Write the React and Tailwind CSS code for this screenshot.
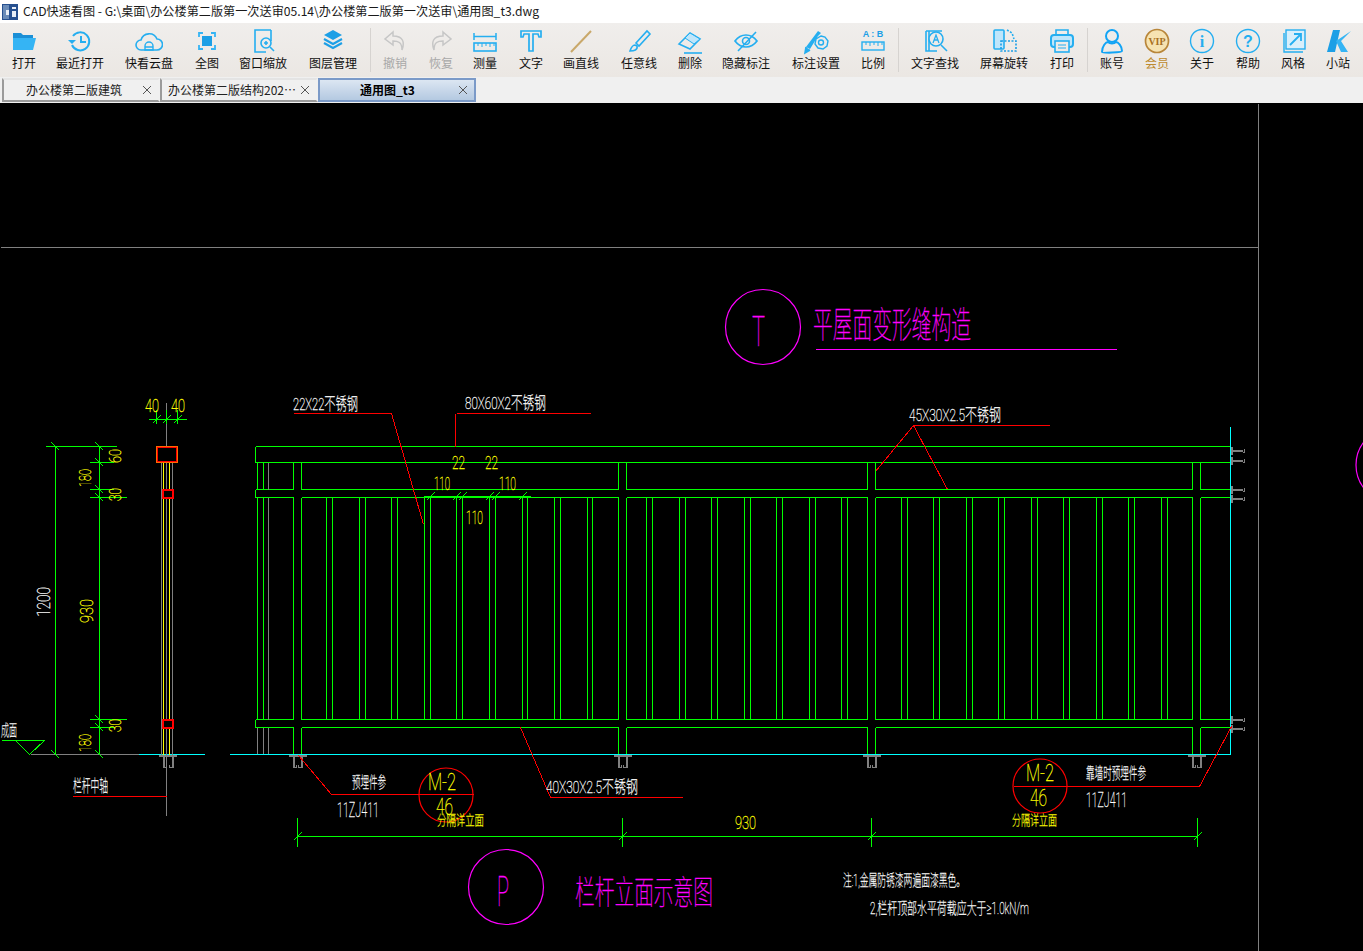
import React from "react";

const BLUE = "#25aef0";
const GREEN = "#00ff00";
const RED = "#ff0000";
const YELLOW = "#ffff00";
const CYAN = "#00ffff";
const MAGENTA = "#ff00ff";
const GRAY = "#808080";

function Ico({ children }) {
  return (
    <svg width="28" height="28" viewBox="0 0 28 28" fill="none" stroke={BLUE} strokeWidth="1.6" className="shrink-0">
      {children}
    </svg>
  );
}

const icons = {
  open: (
    <Ico>
      <path d="M3 6h8l2 2h10v3H3z" fill="#1b8fd6" stroke="none" />
      <path d="M3 11h23l-3 12H3z" fill="#35b4f4" stroke="none" />
    </Ico>
  ),
  recent: (
    <Ico>
      <path d="M7 9a9 9 0 1 1-1 9" strokeWidth="2" />
      <path d="M2 13h8l-4 4z" fill={BLUE} stroke="none" />
      <path d="M15 9v6h5" strokeWidth="2" />
    </Ico>
  ),
  cloud: (
    <Ico>
      <path d="M6 23a5 5 0 0 1 0-10 8.500 8.500 0 0 1 16-1 5.500 5.500 0 0 1 0 11z" strokeWidth="1.600" />
      <path d="M10 23v-4a4 4 0 0 1 8 0v4zM10 20h8" strokeWidth="1.400" />
    </Ico>
  ),
  full: (
    <Ico>
      <path d="M6 10V6h4M18 6h4v4M22 18v4h-4M10 22H6v-4" strokeWidth="1.800" stroke="#35b4f4" />
      <rect x="9" y="9" width="10" height="10" fill="#1c9fe6" stroke="none" />
    </Ico>
  ),
  zoomWin: (
    <Ico>
      <path d="M22 3H6v22h11M22 3v11" strokeWidth="1.6" />
      <circle cx="17" cy="16" r="5" />
      <path d="M15 16h4M17 14v4M21 20l4 4" />
    </Ico>
  ),
  layers: (
    <Ico>
      <path d="M14 3l9 5-9 5-9-5z" fill="#1c9fe6" stroke="none" />
      <path d="M5 12l9 5 9-5M5 16l9 5 9-5" strokeWidth="2.200" stroke="#1c9fe6" />
    </Ico>
  ),
  undo: (
    <Ico>
      <path d="M12 5L4 12l8 6v-4c5 0 9 1 9 9 3-8 1-14-9-14z" stroke="#c6c6c6" strokeWidth="1.500" />
    </Ico>
  ),
  redo: (
    <Ico>
      <path d="M16 5l8 7-8 6v-4c-5 0-9 1-9 9-3-8-1-14 9-14z" stroke="#c6c6c6" strokeWidth="1.500" />
    </Ico>
  ),
  measure: (
    <Ico>
      <path d="M3 6v7M25 6v7M3 9.500h22" strokeWidth="1.500" />
      <rect x="3" y="16" width="22" height="8" />
      <path d="M7 16v3M11 16v4M15 16v3M19 16v4M23 16v3" strokeWidth="1" />
    </Ico>
  ),
  text: (
    <Ico>
      <path d="M4 4h20v6h-2l-1-3h-5v17h-4V7H7l-1 3H4z" strokeWidth="1.700" />
    </Ico>
  ),
  line: (
    <Ico>
      <path d="M4 25L24 4" stroke="#c9a86a" strokeWidth="2" />
    </Ico>
  ),
  pencil: (
    <Ico>
      <path d="M11 16L22 4l3 3-11 12z" />
      <path d="M10 18c-3 0-4 3-5 6 4 0 8-1 7-5z" />
    </Ico>
  ),
  eraser: (
    <Ico>
      <path d="M3 17L14 6l10 6-10 10z" />
      <path d="M9 11l9 6 6-5-10-6z" fill="#bfe6fb" strokeWidth="1" />
      <path d="M8 26h18" />
    </Ico>
  ),
  eye: (
    <Ico>
      <path d="M3 14c6-8 16-8 22 0-6 8-16 8-22 0z" strokeWidth="1.700" />
      <circle cx="14" cy="14" r="3.500" />
      <path d="M6 24L24 5" />
    </Ico>
  ),
  annot: (
    <Ico>
      <path d="M4 20L16 4l3 2-3 3-8 13z" fill={BLUE} stroke="none" />
      <path d="M4 20l-1 6 5-3" fill={BLUE} />
      <path d="M19 9l4 1 3 4-1 5-4 3-5-1-3-4 1-5z" fill="#eeebe8" strokeWidth="1.400" />
      <circle cx="19" cy="15.500" r="2.500" strokeWidth="1.400" />
    </Ico>
  ),
  ratio: (
    <Ico>
      <text x="14" y="10" textAnchor="middle" fontSize="9" fontWeight="700" fill="#1c9fe6" stroke="none" className="font-['Liberation_Sans',sans-serif]">
        A : B
      </text>
      <rect x="3" y="15" width="22" height="8" strokeWidth="1.400" />
      <path d="M7 15v3M11 15v4M15 15v3M19 15v4M23 15v3" strokeWidth="1" />
    </Ico>
  ),
  textFind: (
    <Ico>
      <path d="M5 4h16M5 4v20h11M8 4v20" />
      <circle cx="15" cy="12" r="7" fill="#eeebe8" />
      <path d="M12 16l3-8 3 8M13 13h4" strokeWidth="1.300" />
      <path d="M20 18l6 6" />
    </Ico>
  ),
  rotate: (
    <Ico>
      <rect x="4" y="3" width="10" height="19" rx="1" fill="#bfe6fb" />
      <rect x="11" y="14" width="15" height="10" strokeDasharray="2 1.500" stroke="#1c9fe6" />
      <path d="M17 3l5 3 2 6" strokeDasharray="2 1.500" />
    </Ico>
  ),
  print: (
    <Ico>
      <path d="M8 8V3h12v5" />
      <rect x="3" y="8" width="22" height="12" rx="3" fill="#bfe6fb" strokeWidth="2" />
      <rect x="7" y="14" width="14" height="11" fill="#eeebe8" />
      <path d="M10 18h8M10 21h8" strokeWidth="1" />
    </Ico>
  ),
  user: (
    <Ico>
      <circle cx="14" cy="9" r="6" strokeWidth="2" stroke="#12a4f5" />
      <path d="M4 25c0-6 4-10 6-10 2 2 6 2 8 0 2 0 6 4 6 9 0 2-20 2-20 1z" strokeWidth="2" stroke="#12a4f5" />
    </Ico>
  ),
  vip: (
    <Ico>
      <circle cx="14" cy="14" r="11.500" fill="#f6e3b2" stroke="#b8863a" strokeWidth="1.700" />
      <text x="14" y="17.500" textAnchor="middle" fontSize="10" fontWeight="700" fill="#a8701e" stroke="none" className="font-['Liberation_Serif',serif]">
        VIP
      </text>
    </Ico>
  ),
  about: (
    <Ico>
      <circle cx="14" cy="14" r="11.500" strokeWidth="1.400" />
      <text x="14" y="20" textAnchor="middle" fontSize="16" fontWeight="700" fill={BLUE} stroke="none" className="font-['Liberation_Serif',serif]">
        i
      </text>
    </Ico>
  ),
  help: (
    <Ico>
      <circle cx="14" cy="14" r="11.500" strokeWidth="1.400" />
      <text x="14" y="20" textAnchor="middle" fontSize="16" fontWeight="700" fill={BLUE} stroke="none" className="font-['Liberation_Sans',sans-serif]">
        ?
      </text>
    </Ico>
  ),
  style: (
    <Ico>
      <path d="M5 6v19h19" fill="none" strokeWidth="1.400" />
      <rect x="7" y="3" width="19" height="19" fill="#d9effb" strokeWidth="1.400" />
      <path d="M11 18L22 7M15 7h7v7" strokeWidth="1.800" />
    </Ico>
  ),
  site: (
    <Ico>
      <path d="M9 3h7l-5 22H3z" fill="#1c9fe6" stroke="none" />
      <path d="M12 14L27 4 17 14l7 11h-7z" fill="#35b4f4" stroke="none" />
    </Ico>
  ),
};

const tools = [
  { id: "open", label: "打开", w: "w-[24px]", ml: "ml-[12px]" },
  { id: "recent", label: "最近打开", w: "w-[48px]", ml: "ml-[20px]" },
  { id: "cloud", label: "快看云盘", w: "w-[48px]", ml: "ml-[21px]" },
  { id: "full", label: "全图", w: "w-[24px]", ml: "ml-[22px]" },
  { id: "zoomWin", label: "窗口缩放", w: "w-[48px]", ml: "ml-[20px]" },
  { id: "layers", label: "图层管理", w: "w-[48px]", ml: "ml-[22px]" },
  { sep: true, ml: "ml-[13px]" },
  { id: "undo", label: "撤销", w: "w-[24px]", ml: "ml-[12px]", off: true },
  { id: "redo", label: "恢复", w: "w-[24px]", ml: "ml-[22px]", off: true },
  { id: "measure", label: "测量", w: "w-[24px]", ml: "ml-[20px]" },
  { id: "text", label: "文字", w: "w-[24px]", ml: "ml-[22px]" },
  { id: "line", label: "画直线", w: "w-[36px]", ml: "ml-[20px]" },
  { id: "pencil", label: "任意线", w: "w-[36px]", ml: "ml-[22px]" },
  { id: "eraser", label: "删除", w: "w-[24px]", ml: "ml-[21px]" },
  { id: "eye", label: "隐藏标注", w: "w-[48px]", ml: "ml-[20px]" },
  { id: "annot", label: "标注设置", w: "w-[48px]", ml: "ml-[22px]" },
  { id: "ratio", label: "比例", w: "w-[24px]", ml: "ml-[21px]" },
  { sep: true, ml: "ml-[13px]" },
  { id: "textFind", label: "文字查找", w: "w-[48px]", ml: "ml-[12px]" },
  { id: "rotate", label: "屏幕旋转", w: "w-[48px]", ml: "ml-[21px]" },
  { id: "print", label: "打印", w: "w-[24px]", ml: "ml-[22px]" },
  { sep: true, ml: "ml-[13px]" },
  { id: "user", label: "账号", w: "w-[24px]", ml: "ml-[12px]" },
  { id: "vip", label: "会员", w: "w-[24px]", ml: "ml-[21px]", gold: true },
  { id: "about", label: "关于", w: "w-[24px]", ml: "ml-[21px]" },
  { id: "help", label: "帮助", w: "w-[24px]", ml: "ml-[22px]" },
  { id: "style", label: "风格", w: "w-[24px]", ml: "ml-[21px]" },
  { id: "site", label: "小站", w: "w-[24px]", ml: "ml-[21px]" },
];

function Toolbar() {
  return (
    <div className="flex h-[54px] items-center bg-gradient-to-b from-[#f0eeec] to-[#ebe7e3]">
      {tools.map((t, i) =>
        t.sep ? (
          <div key={i} className={`h-[44px] w-px bg-[#d6d3d0] ${t.ml}`} />
        ) : (
          <div key={i} className={`flex h-full flex-col items-center ${t.w} ${t.ml}`}>
            <div className="mt-[4px] flex h-[28px] items-center justify-center">{icons[t.id]}</div>
            <span
              className={`whitespace-nowrap text-[12px] leading-[16px] ${
                t.gold ? "text-[#bd8a2e]" : t.off ? "text-[#a8a8a8]" : "text-[#111]"
              }`}
            >
              {t.label}
            </span>
          </div>
        )
      )}
    </div>
  );
}

const tabs = [
  { label: "办公楼第二版建筑", textClass: "pl-[22px]" },
  { label: "办公楼第二版结构202⋯", textClass: "pl-[6px]" },
  { label: "通用图_t3", textClass: "pl-[40px] font-bold", active: true },
];

function TabBar() {
  return (
    <div className="flex h-[26px] items-start bg-[#f0f0f0] pl-[2px] pt-px">
      {tabs.map((t) => (
        <div
          key={t.label}
          className={`flex h-[24px] w-[158px] items-center border-2 text-[12px] ${
            t.active
              ? "border-[#7b9ac8] bg-gradient-to-b from-[#dce6f2] to-[#b4c9e1] text-black"
              : "border-transparent border-l-[#9b9b9b] border-b-[#9b9b9b] border-t-[#e4e4e4] text-[#222]"
          }`}
        >
          <span className={`flex-1 whitespace-nowrap ${t.textClass}`}>{t.label}</span>
          <svg width="10" height="10" viewBox="0 0 10 10" className="mr-[6px]" stroke="#555" strokeWidth="1">
            <path d="M1 1l8 8M9 1l-8 8" />
          </svg>
        </div>
      ))}
    </div>
  );
}

// CAD text: stretched to the extents it has in the drawing
function T({ x, y, w, s, c = "#ffffff", rot, children }) {
  return (
    <text
      x={x}
      y={y}
      fontSize={s}
      fill={c}
      stroke={c}
      strokeWidth="0.3"
      textLength={w}
      lengthAdjust="spacingAndGlyphs"
      transform={rot ? `rotate(-90 ${x} ${y})` : undefined}
      className="font-['Roboto','Noto_Sans_CJK_SC',sans-serif] font-thin"
    >
      {children}
    </text>
  );
}

const Ln = ({ d, c = GREEN, w = 1 }) => <path d={d} stroke={c} strokeWidth={w} fill="none" />;

const posts = [
  [293, 301],
  [618, 626],
  [867, 875],
  [1192, 1200],
];
const balusters = [
  326, 332, 359, 365, 391, 397, 424, 430, 456, 462, 489, 495, 522, 527, 554, 560, 587, 592, 646, 652, 679, 685, 711,
  717, 744, 750, 776, 782, 809, 815, 841, 847, 901, 907, 933, 939, 966, 972, 998, 1004, 1031, 1037, 1063, 1069, 1096,
  1102, 1128, 1134, 1161, 1167,
];
const railSpans = [
  [255, 293],
  [301, 618],
  [626, 867],
  [875, 1192],
  [1200, 1230],
];

function Anchor({ a, b, left, right }) {
  return (
    <g>
      <Ln d={`M${left} 755H${right}`} c={GRAY} w={2} />
      <Ln d={`M${a} 755V767`} c={GRAY} w={2} />
      <Ln d={`M${b} 755V767`} c={GRAY} w={2} />
      <Ln d={`M${a} 767h3v-3M${b} 767h-3v-3`} c={GRAY} />
    </g>
  );
}

function WallAnchor({ y }) {
  return (
    <g>
      <Ln d={`M1231 ${y - 4}v8`} c={GRAY} w={2} />
      <Ln d={`M1231 ${y}h11`} c={GRAY} w={2} />
      <Ln d={`M1243 ${y - 1}h1v3h-2`} c={GRAY} />
    </g>
  );
}

function Ticks({ pts, dir = 1, c = GREEN }) {
  return (
    <path
      d={pts.map(([x, y]) => `M${x - 4} ${y + 4 * dir}L${x + 4} ${y - 4 * dir}`).join("")}
      stroke={c}
      strokeWidth="1"
      fill="none"
    />
  );
}

function Drawing() {
  return (
    <svg viewBox="0 103 1363 848" className="block h-full w-full">
      <g transform="translate(0.5 0.5)" shapeRendering="crispEdges">
        <Ln d="M0 247H1258" c={GRAY} />
        <Ln d="M1258 103V951" c={GRAY} />

        {/* railing */}
        <Ln d="M255 446H1230M255 462H1230M255 446V462" />
        {railSpans.map(([a, b]) => (
          <Ln key={a} d={`M${a} 489H${b}M${a} 497H${b}M${a} 719H${b}M${a} 727H${b}`} />
        ))}
        <Ln d="M255 489V497M255 719V727" />
        {posts.flat().map((x) => (
          <Ln key={x} d={`M${x} 462V489M${x} 497V719M${x} 727V754`} />
        ))}
        {balusters.map((x) => (
          <Ln key={x} d={`M${x} 497V719`} />
        ))}
        <Ln d="M257 462V489M263 462V489M257 497V719M263 497V719" />
        <Ln d="M268 462V489M268 497V719M268 727V754M257 727V754M263 727V754" c={GRAY} />

        {/* ground and wall */}
        <Ln d="M30 754H138" c={GRAY} />
        <Ln d="M138 754H204M229 754H1230M1230 426V754" c={CYAN} />
        <Anchor a={163} b={172} left={158} right={176} />
        {posts.map(([a, b]) => (
          <Anchor key={a} a={a} b={b} left={a - 5} right={b + 5} />
        ))}
        <WallAnchor y={450} />
        <WallAnchor y={460} />
        <WallAnchor y={489} />
        <WallAnchor y={498} />
        <WallAnchor y={719} />
        <WallAnchor y={728} />

        {/* section through the post */}
        <Ln d="M166 402V815" c={GRAY} />
        <Ln d="M161 462V754M172 462V754" c={GRAY} />
        <Ln d="M163 462V754M169 462V754" c={YELLOW} />
        <rect x="156" y="446" width="21" height="16" fill="#000" stroke="#ff6a00" />
        <rect x="157" y="447" width="19" height="14" fill="#000" stroke={RED} />
        <rect x="162" y="489" width="10" height="8" fill="#000" stroke={RED} strokeWidth="2" />
        <rect x="162" y="719" width="10" height="8" fill="#000" stroke={RED} strokeWidth="2" />

        {/* dimensions left */}
        <Ln d="M148 419H186M156 409V423M166 409V423M177 409V423" />
        <Ticks pts={[[156, 419], [166, 419], [177, 419]]} />
        <Ln d="M45 446H116M89 462H113M89 489H113M89 497H126M89 719H126M89 727H113M55 446V754M99 446V754" />
        <Ticks
          pts={[[55, 446], [99, 446], [99, 462], [99, 489], [99, 497], [99, 719], [99, 727], [99, 754], [55, 754]]}
          dir={-1}
        />
        <Ln d="M1 740H44M15 740L29 754M29 754L44 740" />

        {/* bottom dimensions */}
        <Ln d="M296 836H1197M297 817V846M622 817V846M871 817V846M1197 817V846" />
        <Ticks pts={[[297, 836], [622, 836], [871, 836], [1197, 836]]} />
        <Ln d="M423 496H530" w={2} />
        <Ticks pts={[[430, 496], [456, 496], [462, 496], [489, 496], [495, 496], [522, 496]]} />

        {/* leaders */}
        <Ln d="M293 413H391M391 413L423 524M456 413H590M455 413V446" c={RED} />
        <Ln d="M913 425H1049M913 425L875 471M913 425L947 489" c={RED} />
        <Ln d="M298 755L331 794H473M520 727L550 797H682" c={RED} />
        <Ln d="M1013 786H1199L1231 726" c={RED} />
        <Ln d="M72 796H166" c={RED} />
        <Ln d="M815 349H1116" c={MAGENTA} />
      </g>

      <g fill="none" strokeWidth="1.200">
        <circle cx="763" cy="327" r="37.500" stroke={MAGENTA} />
        <circle cx="506" cy="887" r="37.500" stroke={MAGENTA} />
        <circle cx="1394" cy="465" r="38" stroke={MAGENTA} />
        <circle cx="446" cy="795" r="27" stroke={RED} />
        <circle cx="1040" cy="786" r="27" stroke={RED} />
      </g>

      <T x={752} y={346} w={13} s={42} c={MAGENTA}>T</T>
      <T x={497} y={906} w={12} s={42} c={MAGENTA}>P</T>
      <T x={813} y={338} w={158} s={36} c={MAGENTA}>平屋面变形缝构造</T>
      <T x={575} y={904} w={138} s={33} c={MAGENTA}>栏杆立面示意图</T>

      <T x={293} y={410} w={65} s={17}>22X22不锈钢</T>
      <T x={465} y={409} w={81} s={17}>80X60X2不锈钢</T>
      <T x={909} y={421} w={92} s={17}>45X30X2.5不锈钢</T>
      <T x={546} y={793} w={92} s={17}>40X30X2.5不锈钢</T>
      <T x={352} y={788} w={34} s={16}>预埋件参</T>
      <T x={337} y={817} w={42} s={20}>11ZJ411</T>
      <T x={1086} y={779} w={60} s={16}>靠墙时预埋件参</T>
      <T x={1086} y={807} w={41} s={20}>11ZJ411</T>
      <T x={73} y={792} w={35} s={17}>栏杆中轴</T>
      <T x={1} y={736} w={16} s={16}>成面</T>
      <T x={843} y={886} w={122} s={16}>注:1,金属防锈漆两遍面漆黑色。</T>
      <T x={870} y={914} w={159} s={16}>2,栏杆顶部水平荷载应大于≥1.0kN/m</T>
      <T x={50} y={617} w={30} s={19} rot>1200</T>

      <T x={145} y={412} w={14} s={18} c={YELLOW}>40</T>
      <T x={171} y={412} w={14} s={18} c={YELLOW}>40</T>
      <T x={452} y={469} w={13} s={19} c={YELLOW}>22</T>
      <T x={485} y={469} w={13} s={19} c={YELLOW}>22</T>
      <T x={434} y={490} w={16} s={18} c={YELLOW}>110</T>
      <T x={499} y={490} w={17} s={18} c={YELLOW}>110</T>
      <T x={466} y={524} w={17} s={18} c={YELLOW}>110</T>
      <T x={735} y={829} w={21} s={18} c={YELLOW}>930</T>
      <T x={428} y={790} w={28} s={23} c={YELLOW}>M-2</T>
      <T x={436} y={815} w={17} s={23} c={YELLOW}>46</T>
      <T x={1026} y={781} w={28} s={23} c={YELLOW}>M-2</T>
      <T x={1030} y={806} w={17} s={23} c={YELLOW}>46</T>
      <T x={437} y={825} w={47} s={14} c={YELLOW}>分隔详立面</T>
      <T x={1012} y={825} w={45} s={14} c={YELLOW}>分隔详立面</T>
      <T x={91} y={487} w={18} s={17} c={YELLOW} rot>180</T>
      <T x={91} y={752} w={18} s={17} c={YELLOW} rot>180</T>
      <T x={93} y={623} w={24} s={19} c={YELLOW} rot>930</T>
      <T x={121} y={463} w={14} s={17} c={YELLOW} rot>60</T>
      <T x={121} y={501} w={13} s={17} c={YELLOW} rot>30</T>
      <T x={121} y={732} w={13} s={17} c={YELLOW} rot>30</T>
    </svg>
  );
}

export default function App() {
  return (
    <div className="flex h-[951px] w-[1363px] flex-col overflow-hidden bg-black font-['Noto_Sans_CJK_SC',sans-serif]">
      <div className="flex h-[23px] items-center bg-white">
        <svg width="16" height="16" viewBox="0 0 16 16" className="ml-[2px]">
          <rect width="16" height="16" fill="#27508f" />
          <rect x="1" y="1" width="6" height="14" fill="#6b8cb8" />
          <path d="M10 3h4v2h-4zM4 6h3v5H4zM10 7h4v6h-4z" fill="#e8eef6" />
        </svg>
        <span className="ml-[5px] whitespace-nowrap text-[12.150px] text-[#1a1a1a]">
          CAD快速看图 - G:\桌面\办公楼第二版第一次送审05.14\办公楼第二版第一次送审\通用图_t3.dwg
        </span>
      </div>
      <Toolbar />
      <TabBar />
      <div className="min-h-0 flex-1 bg-black">
        <Drawing />
      </div>
    </div>
  );
}
